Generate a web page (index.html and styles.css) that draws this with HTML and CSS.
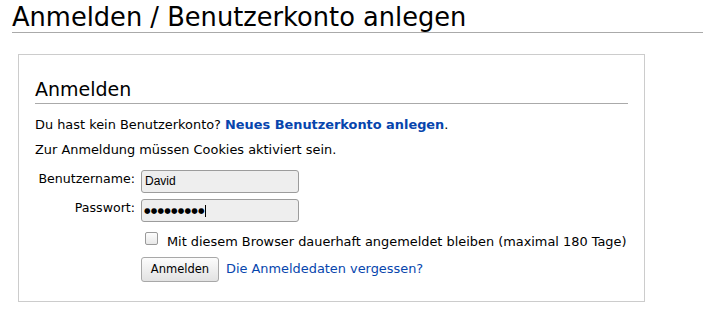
FILE: index.html
```html
<!DOCTYPE html>
<html lang="de">
<head>
<meta charset="utf-8">
<title>Anmelden / Benutzerkonto anlegen</title>
<link rel="stylesheet" href="styles.css">
</head>
<body>
<h1 class="page-title">Anmelden / Benutzerkonto anlegen</h1>
<div class="login-box">
  <h2 class="box-title">Anmelden</h2>
  <p class="line first">Du hast kein Benutzerkonto? <a class="strong-link" href="#">Neues Benutzerkonto anlegen</a>.</p>
  <p class="line">Zur Anmeldung müssen Cookies aktiviert sein.</p>
  <div class="form">
    <label class="label" for="u">Benutzername:</label>
    <div class="field"><span class="input" id="u">David</span></div>
    <label class="label" for="p">Passwort:</label>
    <div class="field"><span class="input pw" id="p">●●●●●●●●●<span class="caret"></span></span></div>
    <div></div>
    <div class="check-row"><span class="checkbox"></span><span class="check-text">Mit diesem Browser dauerhaft angemeldet bleiben (maximal 180 Tage)</span></div>
    <div></div>
    <div class="btn-row"><span class="button">Anmelden</span><a class="link" href="#">Die Anmeldedaten vergessen?</a></div>
  </div>
</div>
</body>
</html>
```
FILE: styles.css
```css
html, body {
  margin: 0;
  padding: 0;
  background: #fff;
  font-family: "DejaVu Sans", sans-serif;
  color: #000;
}
.page-title {
  margin: 0 0 0 12px;
  padding: 3px 0 0 0;
  font-size: 25.7px;
  font-weight: normal;
  line-height: 29px;
  height: 29px;
  border-bottom: 1px solid #aaa;
  white-space: nowrap;
}
.login-box {
  margin: 21px 0 0 18px;
  width: 593px;
  height: 246px;
  border: 1px solid #ccc;
  padding: 0 16px;
}
.box-title {
  margin: 22px 0 0 0;
  padding-bottom: 2px;
  font-size: 19px;
  font-weight: normal;
  line-height: 24px;
  border-bottom: 1px solid #aaa;
}
.line {
  margin: 0;
  font-size: 12.9px;
  line-height: 25px;
  white-space: nowrap;
}
.line.first { margin-top: 8px; }
.strong-link {
  color: #0645ad;
  font-weight: bold;
  text-decoration: none;
}
.form {
  display: grid;
  grid-template-columns: 100px 1fr;
  grid-auto-rows: 29px;
  column-gap: 6px;
  margin-top: 8px;
  font-size: 12.9px;
}
.label {
  text-align: right;
  font-size: 12.6px;
  line-height: 17px;
  white-space: nowrap;
}
.input {
  display: block;
  box-sizing: border-box;
  width: 158px;
  height: 23px;
  border: 1px solid #9c9c9c;
  border-radius: 3px;
  background: #eeeeee;
  padding: 0 3px;
  font-family: "Liberation Sans", Arial, sans-serif;
  font-size: 12px;
  line-height: 21px;
}
.pw {
  display: flex;
  align-items: center;
  font-family: "DejaVu Sans", sans-serif;
  font-size: 7.5px;
  letter-spacing: 0.2px;
  padding-left: 2px;
}
.caret {
  display: inline-block;
  width: 1px;
  height: 12px;
  background: #000;
  margin-left: 0;
}
.check-row {
  display: flex;
  align-items: flex-start;
  padding-left: 4px;
  white-space: nowrap;
}
.checkbox {
  display: block;
  box-sizing: border-box;
  width: 13px;
  height: 13px;
  margin-top: 4px;
  margin-right: 9px;
  border: 1px solid #9a9a9a;
  border-radius: 2px;
  background: linear-gradient(#fdfdfd, #e8e8e8);
}
.check-text {
  padding-top: 3px;
  line-height: 21px;
}
.btn-row {
  display: flex;
  align-items: baseline;
  gap: 7px;
}
.button {
  display: inline-block;
  box-sizing: border-box;
  height: 25px;
  width: 78px;
  text-align: center;
  font-size: 11.5px;
  line-height: 23px;
  border: 1px solid #a8a8a8;
  border-radius: 3px;
  background: linear-gradient(#fcfcfc, #e2e2e2);
}
.link {
  color: #0645ad;
  text-decoration: none;
  white-space: nowrap;
}
```
